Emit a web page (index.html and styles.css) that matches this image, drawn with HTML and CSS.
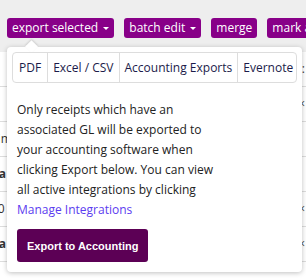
FILE: index.html
```html
<!DOCTYPE html>
<html lang="en">
<head>
<meta charset="UTF-8">
<title>Receipts</title>
<link rel="stylesheet" href="styles.css">
</head>
<body>
<div class="toolbar">
  <button class="tool-btn">export selected <span class="caret"></span></button>
  <button class="tool-btn">batch edit <span class="caret"></span></button>
  <button class="tool-btn">merge</button>
  <button class="tool-btn">mark as reviewed</button>
</div>

<div class="table">
  <div class="row"><span class="cell">&nbsp;</span><span class="end">:</span></div>
  <div class="row"><span class="cell">&nbsp;</span><span class="end">&times;</span></div>
  <div class="row"><span class="cell">Tim Hortons</span><span class="end">&nbsp;</span></div>
  <div class="row"><span class="cell bold">Ca<i class="tag"></i></span><span class="end">&nbsp;</span></div>
  <div class="row"><span class="cell">10 '</span><span class="end">&times;</span></div>
  <div class="row"><span class="cell bold">Ca<i class="tag"></i></span><span class="end">&times;</span></div>
  <div class="row"><span class="cell">&nbsp;</span><span class="end">&nbsp;</span></div>
</div>

<div class="popover">
  <div class="tabs">
    <div class="tab">PDF</div>
    <div class="tab">Excel / CSV</div>
    <div class="tab">Accounting Exports</div>
    <div class="tab">Evernote</div>
  </div>
  <p class="note">Only receipts which have an associated GL will be exported to your accounting software when clicking Export below. You can view all active integrations by clicking <a href="#">Manage Integrations</a></p>
  <button class="export-btn">Export to Accounting</button>
</div>
</body>
</html>
```

FILE: styles.css
```css
html, body {
  margin: 0;
  overflow: hidden;
}

body {
  position: relative;
  width: 306px;
  height: 279px;
  background: #fff;
  font-family: "Open Sans", sans-serif;
}

.toolbar {
  display: flex;
  gap: 10px;
  padding: 18px 7px 0;
  height: 34px;
  background: #eeeeee;
  white-space: nowrap;
  overflow: hidden;
}

.tool-btn {
  flex: none;
  height: 20px;
  padding: 0 5px;
  border: 0;
  border-radius: 3px;
  background: #880088;
  color: #fff;
  font-family: "Open Sans", sans-serif;
  font-size: 12px;
  line-height: 20px;
}

.caret {
  display: inline-block;
  width: 0;
  height: 0;
  margin-left: 2px;
  vertical-align: 2px;
  border-left: 3.5px solid transparent;
  border-right: 3.5px solid transparent;
  border-top: 3.5px solid #fff;
}

.table {
  height: 227px;
  overflow: hidden;
}

.table .row {
  display: flex;
  justify-content: space-between;
  height: 34px;
  border-bottom: 1px solid #dddddd;
  font-size: 12px;
  line-height: 34px;
  color: #333;
  overflow: hidden;
  white-space: nowrap;
}

.table .cell {
  margin-left: -9px;
}

.table .bold {
  font-weight: bold;
}

.table .tag {
  display: inline-block;
  width: 3px;
  height: 12px;
  margin-left: 1px;
  background: #e8a33c;
  vertical-align: -1px;
}

.table .end {
  margin-right: 1px;
  color: #444;
}

.popover {
  position: absolute;
  left: 7px;
  top: 47px;
  width: 295px;
  box-sizing: border-box;
  padding: 5px 5px 10px;
  background: #fff;
  border-radius: 4px;
  box-shadow: 0 1px 5px rgba(0, 0, 0, 0.25);
}

.popover::before {
  content: "";
  position: absolute;
  left: 20px;
  top: -5px;
  width: 9px;
  height: 9px;
  background: #fff;
  transform: rotate(45deg);
  box-shadow: -1px -1px 2px rgba(0, 0, 0, 0.12);
}

.tabs {
  position: relative;
  display: flex;
  height: 31px;
  border: 1px solid #dddddd;
  border-radius: 4px;
  box-sizing: border-box;
}

.tab {
  flex: none;
  padding: 0 5px;
  border-right: 1px solid #dddddd;
  font-size: 12px;
  line-height: 29px;
  color: #1b1b4a;
  white-space: nowrap;
}

.tab:first-child {
  padding: 0 6px;
}

.tab:last-child {
  border-right: 0;
  flex: 1;
  min-width: 0;
}

.note {
  width: 210px;
  margin: 17px 5px 0;
  font-size: 12px;
  line-height: 20px;
  color: #222;
}

.note a {
  display: block;
  color: #5b3cf0;
  text-decoration: none;
}

.export-btn {
  margin: 9px 5px 0;
  height: 33px;
  padding: 0 10px;
  border: 0;
  border-radius: 3px;
  background: #5c0055;
  color: #fff;
  font-family: "Liberation Sans", Arial, sans-serif;
  font-weight: bold;
  font-size: 11px;
}
```
